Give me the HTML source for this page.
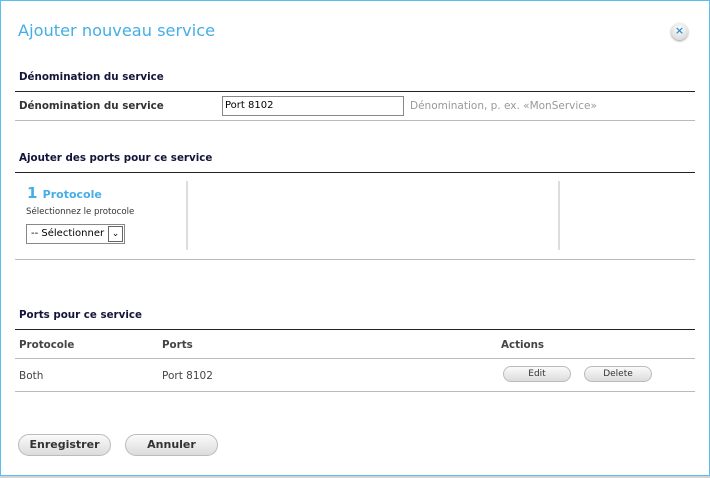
<!DOCTYPE html>
<html><head><meta charset="utf-8"><style>
*{margin:0;padding:0;box-sizing:border-box}
body{width:710px;height:478px;background:#d4d4d4;font-family:"DejaVu Sans","Liberation Sans",sans-serif;position:relative;overflow:hidden}
#d{position:absolute;left:0;top:0;width:710px;height:476px;background:#fff;border:1px solid #5cbdee}
.a{position:absolute;white-space:nowrap}
.h{font-size:10.3px;font-weight:bold;color:#14143a}
.l{font-size:10.5px;color:#444}
.bl{position:absolute;left:14px;width:680px;height:1px;background:#222}
.gl{position:absolute;left:14px;width:680px;height:1px;background:#bbb}
.btn{position:absolute;border:1px solid #bbb;border-radius:11px;background:linear-gradient(#fafafa,#dcdcdc);text-align:center;color:#333}
</style></head><body><div id="d">
<div class="a" style="left:17px;top:20px;font-size:16.2px;color:#45aee6">Ajouter nouveau service</div>
<div class="a" style="left:670px;top:22px;width:17px;height:17px;border-radius:50%;background:radial-gradient(circle at 50% 35%,#fff,#cfcfcf);box-shadow:0 1px 2px #999;color:#2f8fd0;font-size:11px;font-weight:bold;text-align:center;line-height:16px">×</div>
<div class="a h" style="left:18px;top:70px">Dénomination du service</div>
<div class="bl" style="top:90px"></div>
<div class="a h" style="left:18px;top:99px;color:#333">Dénomination du service</div>
<div class="a" style="left:221px;top:95px;width:182px;height:20px;border:1px solid #888;font-size:10px;padding:3px 2px;color:#000">Port 8102</div>
<div class="a l" style="left:409px;top:99px;color:#999">Dénomination, p. ex. «MonService»</div>
<div class="gl" style="top:119px"></div>
<div class="a h" style="left:18px;top:151px">Ajouter des ports pour ce service</div>
<div class="bl" style="top:171px"></div>
<div class="a" style="left:26px;top:183px;font-size:15px;font-weight:bold;color:#45aee6">1 <span style="font-size:11px">Protocole</span></div>
<div class="a" style="left:25px;top:206px;font-size:8.6px;color:#333">Sélectionnez le protocole</div>
<div class="a" style="left:25px;top:223px;width:99px;height:20px;border:1px solid #888;font-size:10px;padding:3px 4px;color:#000;overflow:hidden">-- Sélectionner<span style="position:absolute;right:1px;top:1px;width:15px;height:16px;border:1px solid #666;background:#fff;font-size:9px;text-align:center;line-height:14px">&#8964;</span></div>
<div class="a" style="left:185px;top:180px;width:2px;height:69px;background:#ddd"></div>
<div class="a" style="left:557px;top:180px;width:2px;height:69px;background:#ddd"></div>
<div class="gl" style="top:258px"></div>
<div class="a h" style="left:18px;top:308px">Ports pour ce service</div>
<div class="bl" style="top:328px"></div>
<div class="a h" style="left:18px;top:338px;color:#444">Protocole</div>
<div class="a h" style="left:161px;top:338px;color:#444">Ports</div>
<div class="a h" style="left:500px;top:338px;color:#444">Actions</div>
<div class="gl" style="top:357px"></div>
<div class="a l" style="left:18px;top:369px">Both</div>
<div class="a l" style="left:161px;top:369px">Port 8102</div>
<div class="btn" style="left:502px;top:365px;width:68px;height:16px;font-size:9px;line-height:14px">Edit</div>
<div class="btn" style="left:583px;top:365px;width:68px;height:16px;font-size:9px;line-height:14px">Delete</div>
<div class="gl" style="top:390px"></div>
<div class="btn" style="left:17px;top:433px;width:93px;height:22px;font-size:11px;font-weight:bold;line-height:20px">Enregistrer</div>
<div class="btn" style="left:124px;top:433px;width:93px;height:22px;font-size:11px;font-weight:bold;line-height:20px">Annuler</div>
</div></body></html>
